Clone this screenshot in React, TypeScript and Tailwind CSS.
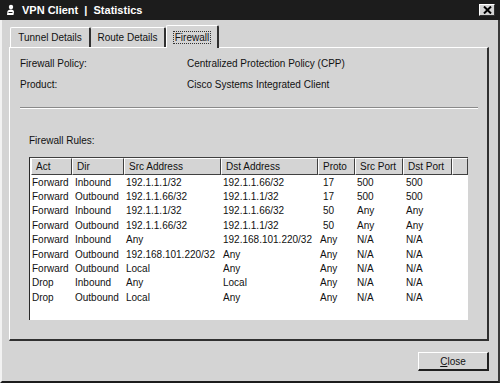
import React from 'react';

type Rule = {
  act: string;
  dir: string;
  src: string;
  dst: string;
  proto: string;
  srcPort: string;
  dstPort: string;
};

const rules: Rule[] = [
  { act: 'Forward', dir: 'Inbound', src: '192.1.1.1/32', dst: '192.1.1.66/32', proto: '17', srcPort: '500', dstPort: '500' },
  { act: 'Forward', dir: 'Outbound', src: '192.1.1.66/32', dst: '192.1.1.1/32', proto: '17', srcPort: '500', dstPort: '500' },
  { act: 'Forward', dir: 'Inbound', src: '192.1.1.1/32', dst: '192.1.1.66/32', proto: '50', srcPort: 'Any', dstPort: 'Any' },
  { act: 'Forward', dir: 'Outbound', src: '192.1.1.66/32', dst: '192.1.1.1/32', proto: '50', srcPort: 'Any', dstPort: 'Any' },
  { act: 'Forward', dir: 'Inbound', src: 'Any', dst: '192.168.101.220/32', proto: 'Any', srcPort: 'N/A', dstPort: 'N/A' },
  { act: 'Forward', dir: 'Outbound', src: '192.168.101.220/32', dst: 'Any', proto: 'Any', srcPort: 'N/A', dstPort: 'N/A' },
  { act: 'Forward', dir: 'Outbound', src: 'Local', dst: 'Any', proto: 'Any', srcPort: 'N/A', dstPort: 'N/A' },
  { act: 'Drop', dir: 'Inbound', src: 'Any', dst: 'Local', proto: 'Any', srcPort: 'N/A', dstPort: 'N/A' },
  { act: 'Drop', dir: 'Outbound', src: 'Local', dst: 'Any', proto: 'Any', srcPort: 'N/A', dstPort: 'N/A' },
];

const columns = [
  { label: 'Act', w: 'w-[41px]' },
  { label: 'Dir', w: 'w-[52px]' },
  { label: 'Src Address', w: 'w-[97px]' },
  { label: 'Dst Address', w: 'w-[97px]' },
  { label: 'Proto', w: 'w-[37px]' },
  { label: 'Src Port', w: 'w-[48px]' },
  { label: 'Dst Port', w: 'w-[49px]' },
  { label: '', w: 'w-[16px]' },
];

const font = { fontFamily: '"Liberation Sans", Arial, sans-serif' };

function HeaderCell({ label, w }: { label: string; w: string }) {
  return (
    <div
      className={`${w} h-[17px] shrink-0 flex items-center pl-[4px] bg-[#d4d4d4] border-t border-l border-t-white border-l-white border-r border-b border-r-[#404040] border-b-[#404040]`}
    >
      {label}
    </div>
  );
}

export default function App() {
  return (
    <div className="w-[500px] h-[383px] bg-[#d4d4d4] flex flex-col text-[10px] text-[#111]" style={font}>
      {/* title bar */}
      <div className="h-[20px] shrink-0 bg-[#1c1c1c] flex items-center pl-[6px] pr-[5px]">
        <svg width="9" height="12" viewBox="0 0 9 12" className="mr-[7px]">
          <circle cx="5" cy="3" r="2.2" fill="#fff" />
          <path d="M1 11 L1.5 7 Q2.5 5.2 5 5.4 Q8 5.6 8 8 L7.5 11 Z" fill="#fff" />
          <path d="M2.5 8.5 L6.5 8.5" stroke="#1c1c1c" strokeWidth="1" />
        </svg>
        <span className="text-white font-bold text-[11px] whitespace-pre">VPN Client  |  Statistics</span>
        <div className="ml-auto w-[16px] h-[12px] bg-[#d4d4d4] border-t border-l border-t-white border-l-white border-r border-b border-r-[#303030] border-b-[#303030] flex items-center justify-center">
          <svg width="9" height="8" viewBox="0 0 9 8">
            <path d="M1 0.5 L8 7.5 M8 0.5 L1 7.5" stroke="#000" strokeWidth="2" />
          </svg>
        </div>
      </div>

      {/* body */}
      <div className="flex-1 flex flex-col pl-[7px] pr-[7px] border-l-2 border-l-[#f2f2f2] border-r-2 border-r-[#3a3a3a] border-b-2 border-b-[#1c1c1c]">
        {/* tabs */}
        <div className="h-[27px] shrink-0 flex items-end pl-[1px]">
          <div className="w-[81px] h-[20px] flex items-center justify-center border-t border-l border-t-white border-l-white border-r-2 border-r-[#303030] rounded-t-[2px]">
            Tunnel Details
          </div>
          <div className="w-[75px] h-[20px] flex items-center justify-center border-t border-t-white border-r-2 border-r-[#303030] rounded-t-[2px]">
            Route Details
          </div>
          <div className="w-[53px] h-[23px] -mb-[1px] relative z-10 bg-[#d4d4d4] flex items-center justify-center border-t border-l border-t-white border-l-white border-r-2 border-r-[#303030] rounded-t-[2px]">
            <span className="px-[1px] leading-[11px] border border-dotted border-[#333]">Firewall</span>
          </div>
        </div>

        {/* tab panel */}
        <div className="w-[480px] h-[294px] shrink-0 flex flex-col border-t border-l border-t-white border-l-white border-r-2 border-b-2 border-r-[#303030] border-b-[#303030] pl-[10px]">
          <div className="flex items-center h-[21px] mt-[5px]">
            <div className="w-[167px]">Firewall Policy:</div>
            <div>Centralized Protection Policy (CPP)</div>
          </div>
          <div className="flex items-center h-[21px]">
            <div className="w-[167px]">Product:</div>
            <div>Cisco Systems Integrated Client</div>
          </div>
          <div className="w-[458px] mt-[12px] border-t border-t-[#8a8a8a] border-b border-b-white" />

          <div className="ml-[9px] mt-[25px] h-[12px] flex items-center">Firewall Rules:</div>

          {/* rules list */}
          <div className="ml-[9px] mt-[11px] w-[439px] h-[163px] bg-white border-t border-l border-t-[#404040] border-l-[#2a2a2a] flex flex-col overflow-hidden">
            <div className="flex pl-[1px]">
              {columns.map((c, i) => (
                <HeaderCell key={i} label={c.label} w={c.w} />
              ))}
            </div>
            {rules.map((r, i) => (
              <div key={i} className="flex h-[14.4px] items-center pl-[1px] whitespace-nowrap">
                <div className="w-[41px] pl-[1px]">{r.act}</div>
                <div className="w-[52px] pl-[3px]">{r.dir}</div>
                <div className="w-[97px] pl-[2px]">{r.src}</div>
                <div className="w-[97px] pl-[2px]">{r.dst}</div>
                <div className={r.proto === 'Any' ? 'w-[37px] pl-[2px]' : 'w-[37px] pl-[5px]'}>{r.proto}</div>
                <div className="w-[48px] pl-[2px]">{r.srcPort}</div>
                <div className="w-[49px] pl-[3px]">{r.dstPort}</div>
              </div>
            ))}
          </div>
        </div>

        {/* footer */}
        <div className="flex justify-end w-[480px] mt-[11px]">
          <button className="w-[71px] h-[19px] bg-[#d4d4d4] border-t border-l border-t-white border-l-white border-r-2 border-b-2 border-r-[#202020] border-b-[#202020] flex items-center justify-center text-[10px]">
            <span className="underline">C</span>lose
          </button>
        </div>
      </div>
    </div>
  );
}
